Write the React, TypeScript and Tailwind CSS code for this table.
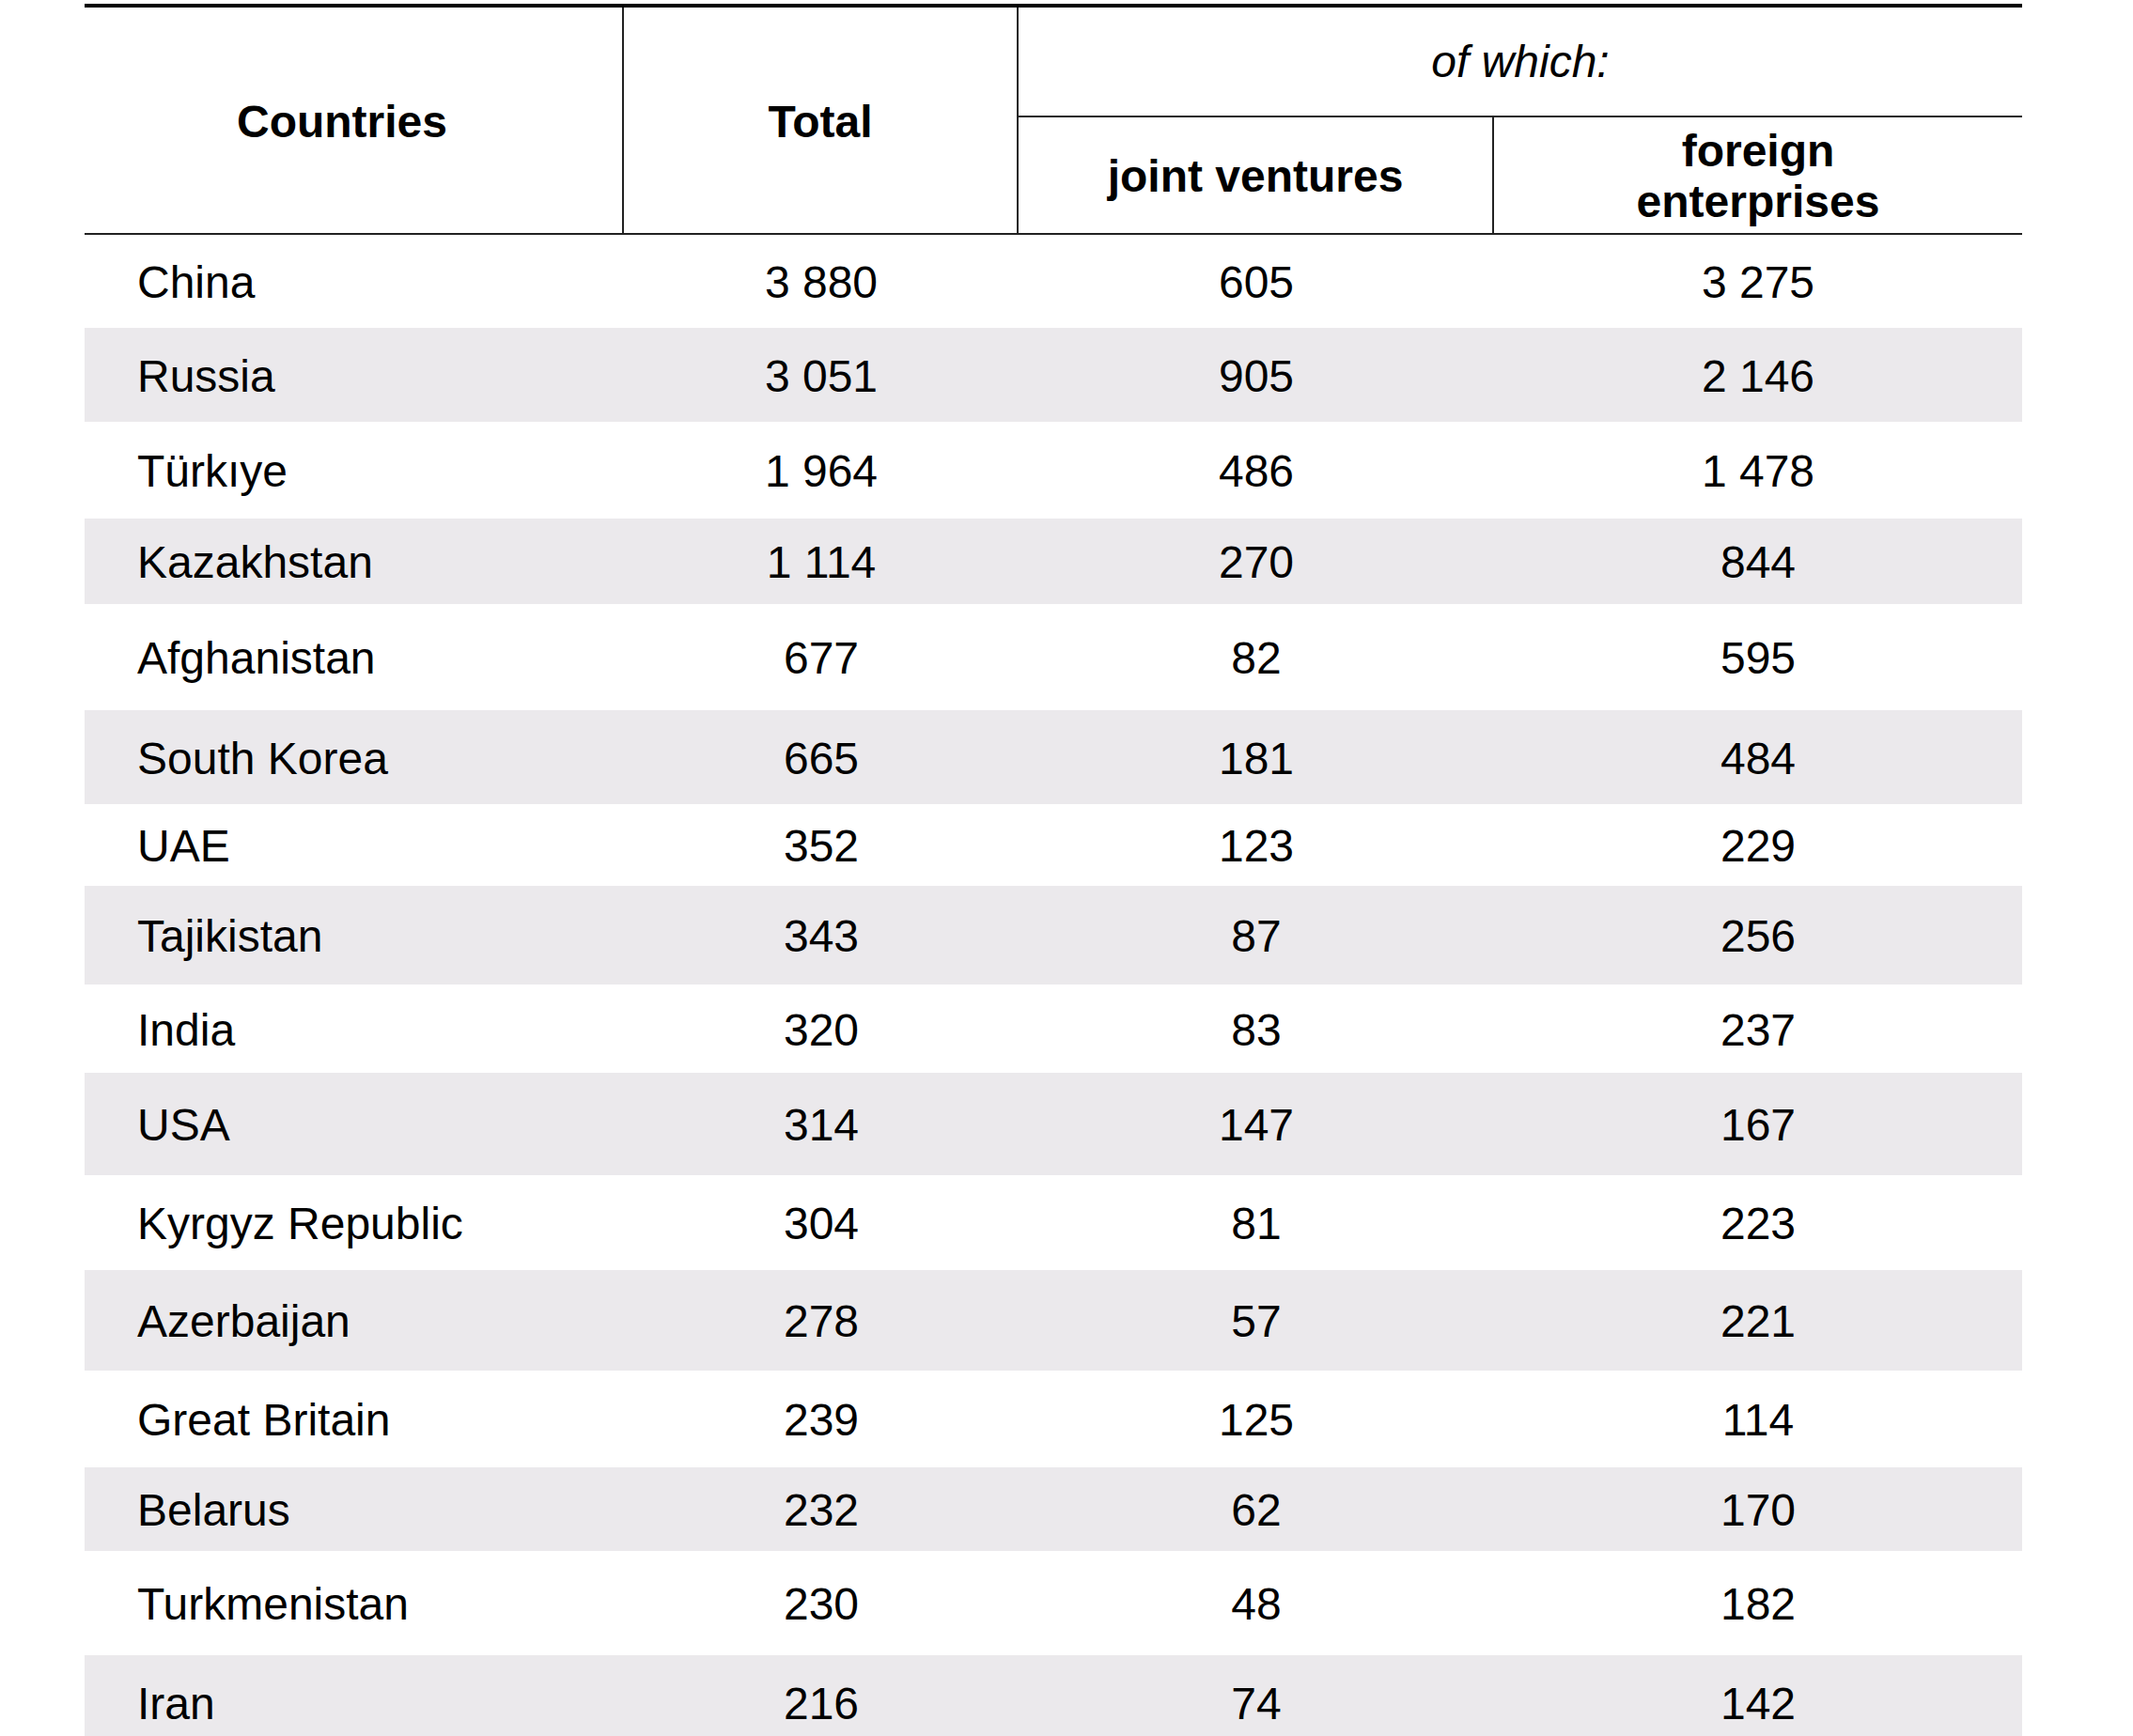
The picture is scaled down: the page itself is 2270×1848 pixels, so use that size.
// Foreign-invested enterprises by country, table view
type Row = {
  country: string;
  total: string;
  joint: string;
  foreign: string;
  h: string;
};

const rows: Row[] = [
  { country: "China", total: "3 880", joint: "605", foreign: "3 275", h: "h-[99px]" },
  { country: "Russia", total: "3 051", joint: "905", foreign: "2 146", h: "h-[100px]" },
  { country: "Türkıye", total: "1 964", joint: "486", foreign: "1 478", h: "h-[103px]" },
  { country: "Kazakhstan", total: "1 114", joint: "270", foreign: "844", h: "h-[91px]" },
  { country: "Afghanistan", total: "677", joint: "82", foreign: "595", h: "h-[113px]" },
  { country: "South Korea", total: "665", joint: "181", foreign: "484", h: "h-[100px]" },
  { country: "UAE", total: "352", joint: "123", foreign: "229", h: "h-[87px]" },
  { country: "Tajikistan", total: "343", joint: "87", foreign: "256", h: "h-[105px]" },
  { country: "India", total: "320", joint: "83", foreign: "237", h: "h-[94px]" },
  { country: "USA", total: "314", joint: "147", foreign: "167", h: "h-[109px]" },
  { country: "Kyrgyz Republic", total: "304", joint: "81", foreign: "223", h: "h-[101px]" },
  { country: "Azerbaijan", total: "278", joint: "57", foreign: "221", h: "h-[107px]" },
  { country: "Great Britain", total: "239", joint: "125", foreign: "114", h: "h-[103px]" },
  { country: "Belarus", total: "232", joint: "62", foreign: "170", h: "h-[89px]" },
  { country: "Turkmenistan", total: "230", joint: "48", foreign: "182", h: "h-[111px]" },
  { country: "Iran", total: "216", joint: "74", foreign: "142", h: "h-[100px]" },
];

const cols = "grid grid-cols-[574px_420px_506px_562px]";

export default function App() {
  return (
    <div className="min-h-screen bg-white pl-[90px] pt-[4px] font-['Liberation_Sans',Arial,sans-serif] text-[48px] leading-none text-black">
      <div className="w-[2062px]">
        {/* ---------- header ---------- */}
        <div
          className={`${cols} grid-rows-[117px_123px] border-t-4 border-b-2 border-t-black border-b-[#222]`}
        >
          <div className="row-span-2 flex items-center justify-center border-r-2 border-[#222] pr-[24px] pt-[3px] font-bold">
            Countries
          </div>
          <div className="row-span-2 flex items-center justify-center border-r-2 border-[#222] pt-[3px] font-bold">
            Total
          </div>
          <div className="col-span-2 flex items-center justify-center border-b-2 border-[#222] italic">
            of which:
          </div>
          <div className="flex items-center justify-center border-r-2 border-[#222] pt-[3px] font-bold">
            joint ventures
          </div>
          <div className="flex items-center justify-center pt-[3px] text-center font-bold leading-[54px]">
            foreign
            <br />
            enterprises
          </div>
        </div>

        {/* ---------- body ---------- */}
        {rows.map((r, i) => (
          <div
            key={r.country}
            className={`${cols} ${r.h} items-center pt-[3px] ${i % 2 === 1 ? "bg-[#ebe9ec]" : "bg-white"}`}
          >
            <div className="pl-[56px]">{r.country}</div>
            <div className="text-center">{r.total}</div>
            <div className="text-center">{r.joint}</div>
            <div className="text-center">{r.foreign}</div>
          </div>
        ))}
      </div>
    </div>
  );
}
